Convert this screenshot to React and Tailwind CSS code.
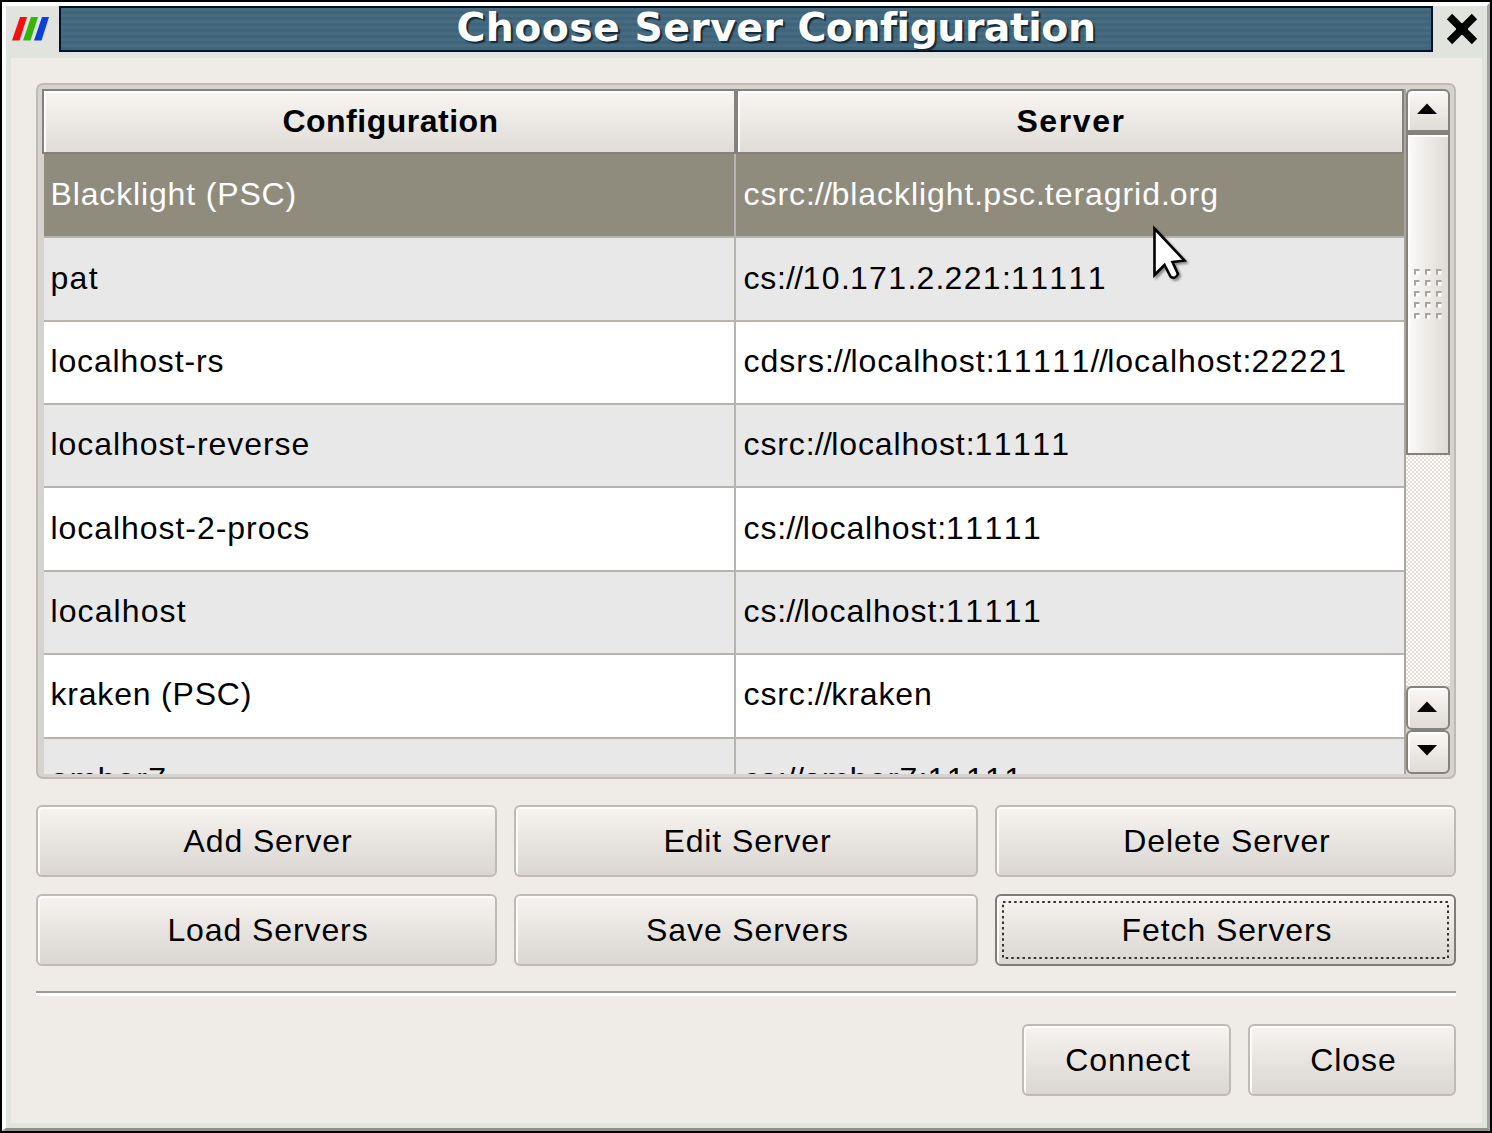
import React from "react";

const rows = [
  { h: "h-[84px] leading-[80px]", name: "Blacklight (PSC)", server: "csrc://blacklight.psc.teragrid.org", ns: "tracking-[0.85px]", ss: "tracking-[0.95px]", selected: true },
  { h: "h-[84px] leading-[80px]", name: "pat", server: "cs://10.171.2.221:11111", ns: "tracking-[1.3px]", ss: "tracking-[0.8px]" },
  { h: "h-[83px] leading-[78px]", name: "localhost-rs", server: "cdsrs://localhost:11111//localhost:22221", ns: "tracking-[0.85px]", ss: "tracking-[1px]" },
  { h: "h-[83px] leading-[78px]", name: "localhost-reverse", server: "csrc://localhost:11111", ns: "tracking-[0.95px]", ss: "tracking-[0.9px]" },
  { h: "h-[84px] leading-[80px]", name: "localhost-2-procs", server: "cs://localhost:11111", ns: "tracking-[0.95px]", ss: "tracking-[0.9px]" },
  { h: "h-[83px] leading-[78px]", name: "localhost", server: "cs://localhost:11111", ns: "tracking-[1.1px]", ss: "tracking-[0.9px]" },
  { h: "h-[84px] leading-[78px]", name: "kraken (PSC)", server: "csrc://kraken", ns: "tracking-[0.8px]", ss: "tracking-[0.9px]" },
  { h: "h-[84px] leading-[80px]", name: "amber7", server: "cs://amber7:11111", ns: "tracking-[1.4px]", ss: "tracking-[1.1px]" },
];

function Url({ text }) {
  return text.split(/(\/\/|[:.]|\d+)/).filter(Boolean).map((part, i) => {
    let cls;
    if (part === "//") cls = "tracking-[-0.6px]";
    else if (/^[:.]$/.test(part)) cls = "tracking-[0px]";
    else if (/^\d+$/.test(part)) cls = "tracking-[1.4px]";
    return <span key={i} className={cls}>{part}</span>;
  });
}

function Button({ children, className, focused }) {
  return (
    <button
      className={
        "relative h-[72px] rounded-[6px] border-[2px] bg-linear-to-b from-[#f6f3f0] to-[#dad6d2] pl-[3px] text-[32px] leading-none tracking-[0.9px] whitespace-nowrap shadow-[inset_2px_2px_0_#fdfcfb] " +
        (focused ? "border-[#7f7c78] " : "border-[#bfbab6] ") +
        (className || "")
      }
    >
      {focused && (
        <svg className="absolute left-[5px] top-[5px] h-[58px] w-[447px]" viewBox="0 0 447 58">
          <rect x="1" y="1" width="445" height="56" fill="none" stroke="#33312f" strokeWidth="2" strokeDasharray="2.5 3.1" />
        </svg>
      )}
      {children}
    </button>
  );
}

function Arrow({ down }) {
  return (
    <svg className="h-[12px] w-[20px]" viewBox="0 0 20 12">
      <path d={down ? "M0 1H20L10 11.5Z" : "M0 11H20L10 0.5Z"} fill="#000" />
    </svg>
  );
}

function StepButton({ down, className }) {
  return (
    <div className={"flex w-[44px] shrink-0 items-center justify-center border-[2px] border-[#85827e] bg-linear-to-b from-[#faf8f6] to-[#dfdbd6] shadow-[inset_2px_2px_0_#ffffff] " + className}>
      <Arrow down={down} />
    </div>
  );
}

function Scrollbar() {
  return (
    <div className="flex w-[44px] flex-col">
      <StepButton className="h-[43px] rounded-t-[6px] pr-[3px] pb-[3px]" />
      <div className="flex h-[323px] shrink-0 justify-center border-[2px] border-t-[3px] border-[#85827e] bg-linear-to-r from-[#fbfaf9] to-[#dfdbd6] pt-[133px] shadow-[inset_2px_2px_0_#ffffff]">
        <svg className="h-[54px] w-[30px]" viewBox="0 0 30 54">
          {[0, 1, 2, 3, 4].map((r) =>
            [0, 1, 2].map((c) => (
              <g key={r + "-" + c} transform={`translate(${c * 11 + 1} ${r * 11 + 1})`}>
                <rect x="1.5" y="1.5" width="4" height="4" fill="#fff" />
                <path d="M1 5.500V1H5.500" fill="none" stroke="#a8a49f" strokeWidth="2" />
              </g>
            ))
          )}
        </svg>
      </div>
      <div className="h-[231px] shrink-0 bg-[conic-gradient(#e3dfdb_25%,#fcfbfa_0_50%,#e3dfdb_0_75%,#fcfbfa_0)] bg-size-[4px_4px]" />
      <StepButton className="h-[44px] rounded-[6px] pr-[3px] pb-[3px]" />
      <StepButton down className="h-[44px] rounded-[6px] pr-[3px] pb-[5px]" />
    </div>
  );
}

export default function App() {
  return (
    <div className="relative h-[1133px] w-[1492px] overflow-hidden border-[2px] border-black bg-[#e1e3de] font-['Liberation_Sans',Arial,sans-serif] text-black [font-kerning:none]">
      <div className="flex h-[1129px] w-[1488px] flex-col border-t-[4px] border-r-[3px] border-b-[3px] border-l-[4px] border-t-white border-r-[#a2a39c] border-b-[#8f9088] border-l-white">
        <header className="flex h-[52px] shrink-0 items-start">
          <div className="flex h-[46px] w-[53px] items-center pl-[6px]">
            <svg className="h-[26px] w-[38px]" viewBox="0 0 38 26">
              <path d="M0 24.500L8 1H15L7.500 24.500Z" fill="#f01010" />
              <path d="M11 24.500L19 1H26L18.500 24.500Z" fill="#35b50c" />
              <path d="M22 24.500L30 1H37L29.500 24.500Z" fill="#0b3fdc" />
            </svg>
          </div>
          <div className="flex h-[46px] w-[1374px] items-center justify-center border-[2px] border-[#04102a] bg-[#43677b] bg-[repeating-linear-gradient(180deg,#456c80_0_3px,#40647a_3px_6px)] pl-[60px]">
            <h1 className="-mt-[2px] font-['DejaVu_Sans'] text-[39.4px] leading-none font-bold tracking-[0.42px] whitespace-nowrap text-white [text-shadow:2px_2px_1px_#142838]">
              Choose Server <span className="tracking-[-0.48px]">Configuration</span>
            </h1>
          </div>
          <div className="flex h-[46px] w-[54px] items-center justify-center pl-[4px]">
            <svg className="h-[32px] w-[32px]" viewBox="0 0 32 32">
              <path d="M3.500 3.500L28.500 28.500M28.500 3.500L3.500 28.500" stroke="#000" strokeWidth="7.500" />
              <rect x="10" y="10" width="12" height="12" rx="1" fill="#000" />
            </svg>
          </div>
        </header>

        <main className="mr-[5px] ml-[5px] flex h-[1065px] flex-col bg-[#efebe7] pt-[25px] pl-[25px]">
          <section className="flex h-[696px] w-[1420px] shrink-0 rounded-[7px] border-[2px] border-[#bfbab6] bg-[#d6d2ce] pt-[4px] pl-[4px]">
            <div className="flex h-[685px] w-[1364px] shrink-0 flex-col overflow-hidden border-r-[2px] border-r-[#aaa6a2]">
              <div className="flex h-[65px] shrink-0 border-[2px] border-[#85827e] bg-linear-to-b from-[#f8f5f2] to-[#e0dcd8] text-[32px] leading-[61px] font-bold shadow-[inset_2px_2px_0_#fff]">
                <div className="w-[694px] border-r-[4px] border-[#85827e] pl-[3px] text-center tracking-[0.5px]">Configuration</div>
                <div className="flex-1 border-l-[2px] border-white text-center tracking-[1.6px]">Server</div>
              </div>
              {rows.map((r, i) => (
                <div
                  key={r.name}
                  className={
                    "ml-[2px] flex shrink-0 border-b-[2px] border-[#b7b3af] text-[32px] whitespace-nowrap " +
                    r.h +
                    (r.selected ? " bg-[#908c7d] text-white" : i % 2 ? " bg-[#e8e8e8]" : " bg-white")
                  }
                >
                  <div className={"w-[692px] border-r-[2px] border-[#b7b3af] pl-[6.500px] " + r.ns}>{r.name}</div>
                  <div className={"flex-1 pl-[7.500px] " + r.ss}><Url text={r.server} /></div>
                </div>
              ))}
            </div>
            <Scrollbar />
          </section>

          <div className="mt-[26px] grid grid-cols-[461px_464px_461px] gap-x-[17px] gap-y-[17px]">
            <Button>Add Server</Button>
            <Button>Edit Server</Button>
            <Button>Delete Server</Button>
            <Button>Load Servers</Button>
            <Button>Save Servers</Button>
            <Button focused>Fetch Servers</Button>
          </div>

          <div className="mt-[25px] h-[5px] w-[1420px] shrink-0 border-t-[2px] border-b-[3px] border-t-[#9d9995] border-b-white" />

          <footer className="mt-[28px] flex w-[1420px] justify-end gap-[17px]">
            <Button className="w-[209px]">Connect</Button>
            <Button className="w-[208px]">Close</Button>
          </footer>
        </main>
      </div>

      <svg className="absolute top-[220px] left-[1148px] h-[64px] w-[44px] drop-shadow-[2px_2px_1px_rgba(0,0,0,0.4)]" viewBox="0 0 44 64">
        <path d="M4.500 6.500V53L14.500 43L20.500 54.500Q25 58 28 52L22.500 40L34.500 38.500Z" fill="#fff" stroke="#000" strokeWidth="2.600" />
      </svg>
    </div>
  );
}
